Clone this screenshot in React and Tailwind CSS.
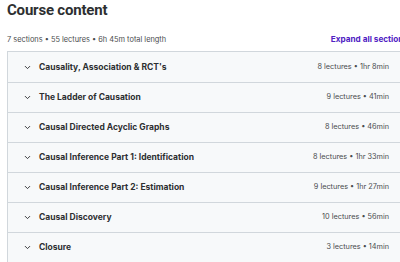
import { ChevronDown } from "lucide-react";

const sections = [
  { title: "Causality, Association & RCT's", meta: "8 lectures • 1hr 8min" },
  { title: "The Ladder of Causation", meta: "9 lectures • 41min" },
  { title: "Causal Directed Acyclic Graphs", meta: "8 lectures • 46min" },
  { title: "Causal Inference Part 1: Identification", meta: "8 lectures • 1hr 33min" },
  { title: "Causal Inference Part 2: Estimation", meta: "9 lectures • 1hr 27min" },
  { title: "Causal Discovery", meta: "10 lectures • 56min" },
  { title: "Closure", meta: "3 lectures • 14min" },
];

export default function App() {
  return (
    <div
      className="w-[400px] h-[262px] overflow-hidden bg-white text-[#2d2f31]"
      style={{ fontFamily: "Inter, 'Noto Sans', sans-serif" }}
    >
      <div className="w-[412px] pl-[7px]">
        {/* Header */}
        <h2
          className="pt-[2px] text-[15px] leading-[16px] font-bold tracking-[-0.2px] h-[22px]"
          style={{ fontFamily: "Roboto, 'Liberation Sans', sans-serif" }}
        >
          Course content
        </h2>
        <div className="flex items-center justify-between h-[24px] pt-[12px] pb-[1px]">
          <span className="text-[7.4px] text-[#4a4c4e]">
            7 sections • 55 lectures • 6h 45m total length
          </span>
          <span className="text-[8.2px] font-bold text-[#5022c3] mr-[4px]">
            Expand all sections
          </span>
        </div>

        {/* Sections */}
        <div className="mt-[5px] border border-[#d1d7dc] bg-[#f7f9fa]">
          {sections.map((s, i) => (
            <div
              key={i}
              className={`flex items-center justify-between h-[30px] pl-[15px] pr-[22px] ${
                i > 0 ? "border-t border-[#d1d7dc]" : ""
              }`}
            >
              <div className="flex items-center gap-[7px]">
                <ChevronDown size={9} strokeWidth={2.5} className="text-[#2d2f31]" />
                <span className="text-[8.5px] font-bold">{s.title}</span>
              </div>
              <span className="text-[7.3px] text-[#4a4c4e]">{s.meta}</span>
            </div>
          ))}
        </div>
      </div>
    </div>
  );
}
